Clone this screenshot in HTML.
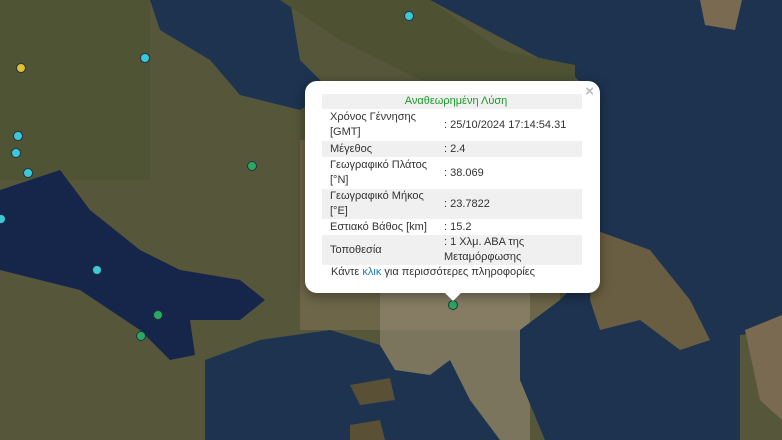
<!DOCTYPE html>
<html><head><meta charset="utf-8"><style>
html,body{margin:0;padding:0;width:782px;height:440px;overflow:hidden;background:#5a5634}
svg{position:absolute;left:0;top:0}
.pop{position:absolute;left:305px;top:81px;width:295px;height:212px;background:#fff;border-radius:12px;box-shadow:0 3px 12px rgba(0,0,0,.4);font-family:"Liberation Sans","Noto Sans CJK SC",sans-serif;font-size:11px;color:#333}
.tip{position:absolute;left:444px;top:292px;width:0;height:0;border-left:9px solid transparent;border-right:9px solid transparent;border-top:9px solid #fff}
.x{position:absolute;right:6px;top:2px;color:#bbb;font-size:15px;font-weight:bold}
table{position:absolute;left:17px;top:13px;width:260px;border-collapse:collapse}
td{padding:0 0 0 8px;line-height:15px;vertical-align:middle;height:16px}
td.v{padding-left:1px}
tr.g td{background:#f0f0f0}
.f{position:absolute;left:26px;top:185px}
.dot{position:absolute;width:8px;height:8px;border-radius:50%;border:1px solid #234}
</style></head><body>
<svg width="782" height="440" viewBox="0 0 782 440">
<rect width="782" height="440" fill="#56573a"/>
<rect x="0" y="0" width="150" height="180" fill="#4c5232" opacity=".7"/>
<rect x="300" y="140" width="260" height="190" fill="#8a7a5c" opacity=".45"/>
<rect x="380" y="290" width="150" height="150" fill="#9a8e7c" opacity=".55"/>
<path d="M330,0 L782,0 L782,330 L740,335 L740,440 L545,440 L520,380 L520,330 L560,300 L600,260 L600,100 L575,77 L430,0Z" fill="#1d3350"/>
<path d="M150,0 L290,0 L300,60 L330,90 L300,110 L240,95 L210,60 L160,30Z" fill="#1d3350"/>
<path d="M280,0 L430,0 L500,50 L575,65 L575,90 L520,90 L420,80 L340,40Z" fill="#4e5233"/>
<path d="M700,0 L742,0 L735,30 L705,25Z" fill="#7a6a52"/>
<path d="M595,230 L650,250 L690,300 L710,340 L680,350 L640,320 L600,330 L590,300Z" fill="#6a5e42"/>
<path d="M745,330 L782,315 L782,420 L760,400Z" fill="#7a6a52"/>
<path d="M0,190 L60,170 L90,210 L140,250 L180,270 L240,280 L265,300 L240,320 L190,320 L195,355 L170,360 L140,330 L80,290 L0,270Z" fill="#15264a"/>
<path d="M205,360 L260,340 L330,330 L380,345 L395,370 L430,375 L450,360 L470,400 L500,440 L205,440Z" fill="#1d3350"/>
<path d="M350,385 L390,378 L395,400 L360,405Z" fill="#5a5036"/>
<path d="M350,425 L380,420 L385,440 L350,440Z" fill="#5a5036"/>
</svg>
<div class="dot" style="left:404px;top:11px;background:#3cc8d8"></div>
<div class="dot" style="left:140px;top:53px;background:#3cc8d8"></div>
<div class="dot" style="left:16px;top:63px;background:#e0c030"></div>
<div class="dot" style="left:13px;top:131px;background:#3cc8d8"></div>
<div class="dot" style="left:11px;top:148px;background:#3cc8d8"></div>
<div class="dot" style="left:23px;top:168px;background:#3cc8d8"></div>
<div class="dot" style="left:-4px;top:214px;background:#3cc8d8"></div>
<div class="dot" style="left:92px;top:265px;background:#3cc8d8"></div>
<div class="dot" style="left:247px;top:161px;background:#2aa860"></div>
<div class="dot" style="left:153px;top:310px;background:#2aa860"></div>
<div class="dot" style="left:136px;top:331px;background:#2aa860"></div>
<div class="dot" style="left:448px;top:300px;background:#2aa860"></div>
<div class="pop">
<span class="x">×</span>
<table>
<tr class="g"><td colspan="2" style="text-align:center;color:#1a9a2a;height:15px">Αναθεωρημένη Λύση</td></tr>
<tr><td style="height:32px;width:113px">Χρόνος Γέννησης<br>[GMT]</td><td class="v">: 25/10/2024 17:14:54.31</td></tr>
<tr class="g"><td>Μέγεθος</td><td class="v">: 2.4</td></tr>
<tr><td style="height:32px">Γεωγραφικό Πλάτος<br>[°N]</td><td class="v">: 38.069</td></tr>
<tr class="g"><td style="height:30px">Γεωγραφικό Μήκος<br>[°E]</td><td class="v">: 23.7822</td></tr>
<tr><td>Εστιακό Βάθος [km]</td><td class="v">: 15.2</td></tr>
<tr class="g"><td style="height:30px">Τοποθεσία</td><td class="v">: 1 Χλμ. ΑΒΑ της<br>Μεταμόρφωσης</td></tr>
</table>
<div class="f">Κάντε <span style="color:#1a7ab8">κλικ</span> για περισσότερες πληροφορίες</div>
</div>
<div class="tip"></div>
</body></html>
